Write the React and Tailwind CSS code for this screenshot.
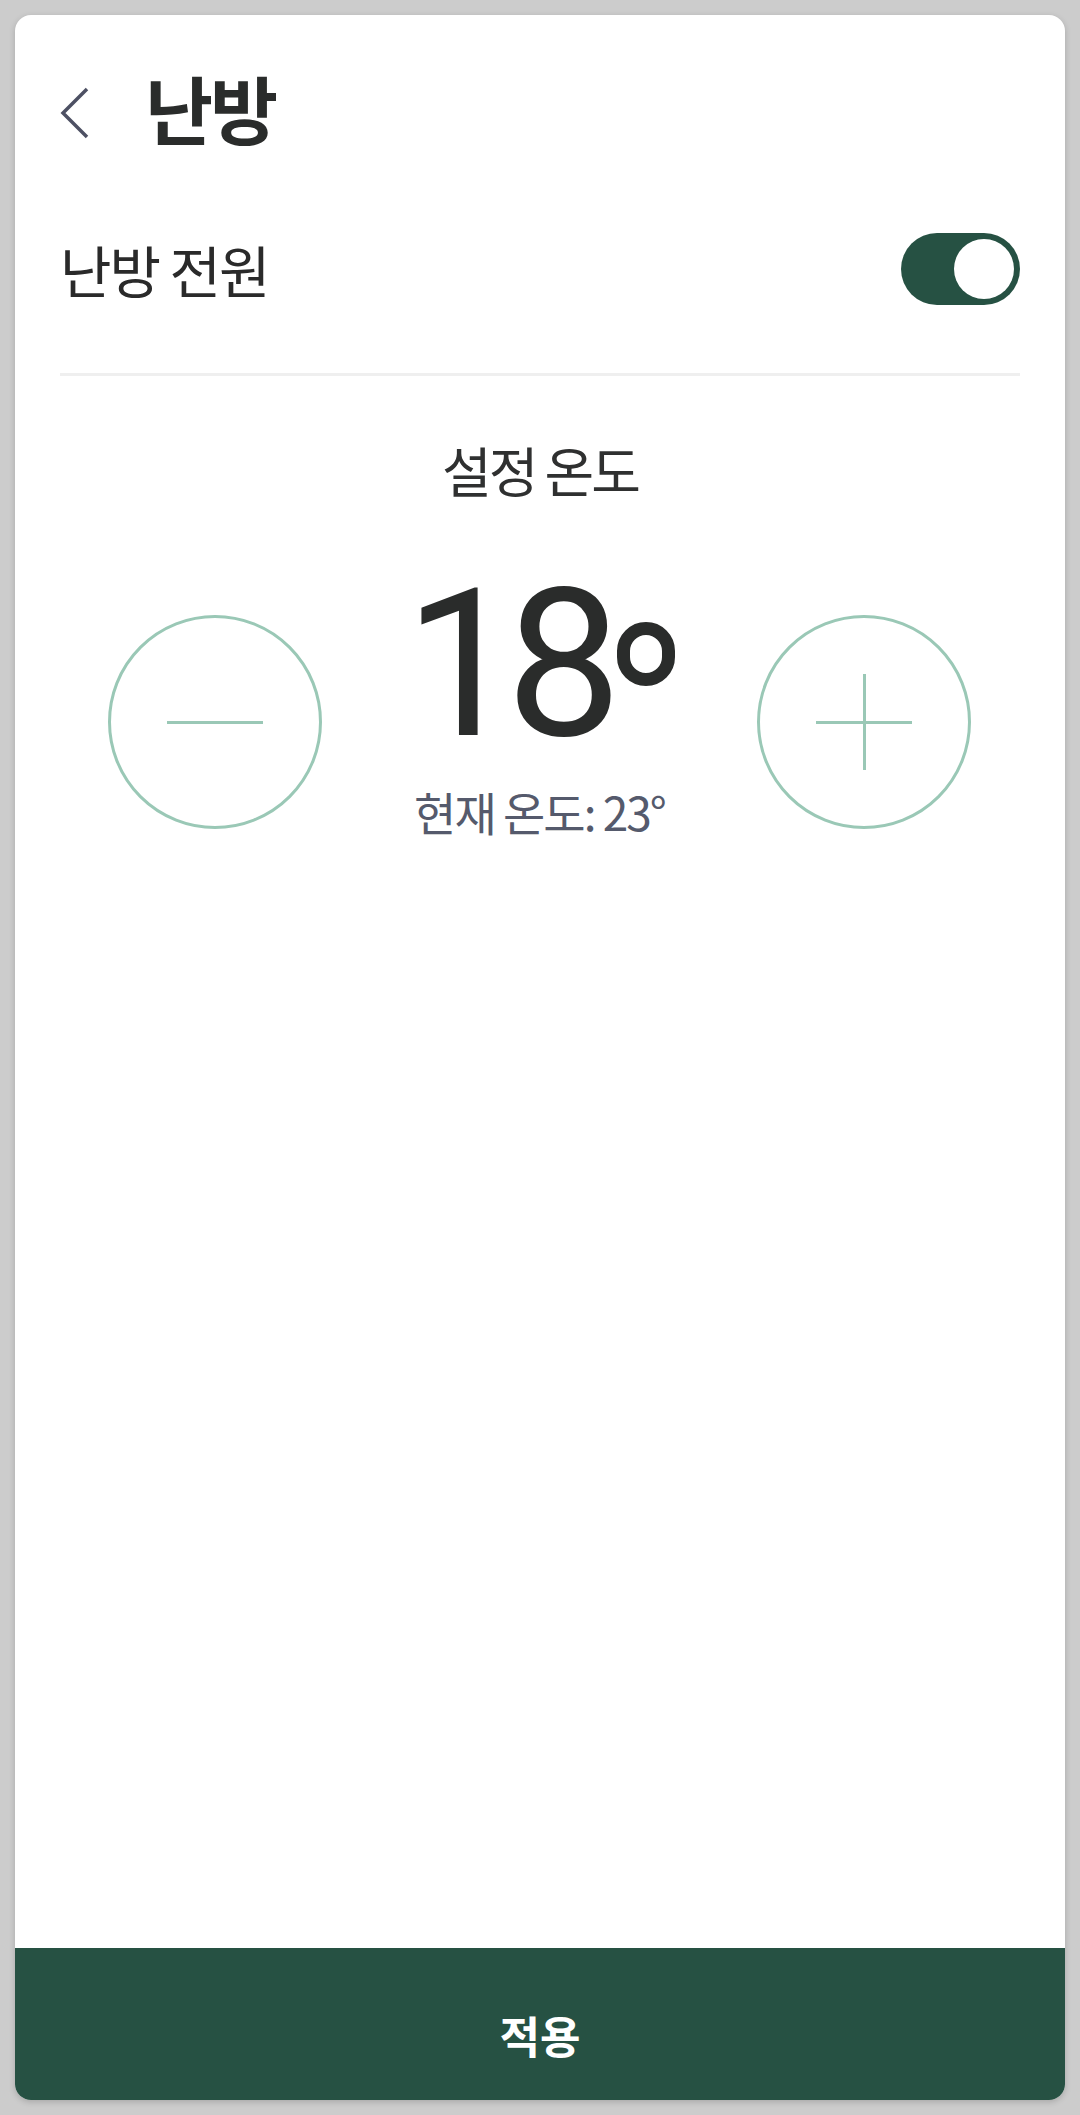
import React from "react";

const KR = { fontFamily: '"Noto Sans CJK KR", "Noto Sans", sans-serif' };

function CircleButton({ plus }) {
  return (
    <div className="w-[214px] h-[214px] rounded-full border-[3px] border-[#9ac8b6] flex items-center justify-center shrink-0 relative">
      <div className="w-[96px] h-[3px] bg-[#9ac8b6]" />
      {plus && <div className="absolute w-[3px] h-[96px] bg-[#9ac8b6]" />}
    </div>
  );
}

export default function App() {
  return (
    <div className="w-[1080px] h-[2115px] bg-[#cccccc] pt-[15px] px-[15px]" style={KR}>
      <div className="w-[1050px] h-[2085px] bg-white rounded-2xl overflow-hidden flex flex-col shadow-[0_2px_6px_rgba(0,0,0,0.18)]">
        {/* Header */}
        <div className="pt-[52px] h-[132px] pl-[45px] flex items-center">
          <svg width="30" height="52" viewBox="0 0 30 52" className="shrink-0 mt-[12px]">
            <polyline points="27,2 3,26 27,50" fill="none" stroke="#4d5063" strokeWidth="3.5" />
          </svg>
          <div className="ml-[55px] text-[74px] leading-[80px] font-bold text-[#2a2c2b] tracking-[-3px]">난방</div>
        </div>

        {/* Power row */}
        <div className="mt-[86px] h-[72px] px-[45px] flex items-center justify-between">
          <div className="text-[56px] leading-none text-[#2a2a2a] tracking-[-2px]">난방 전원</div>
          <div className="w-[119px] h-[72px] rounded-full bg-[#265143] p-[6px] flex justify-end">
            <div className="w-[60px] h-[60px] rounded-full bg-white" />
          </div>
        </div>

        <div className="mx-[45px] mt-[68px] h-[3px] bg-[#efefef]" />

        <div className="mt-[64px] h-[60px] flex items-center justify-center text-[54px] text-[#2f3030] tracking-[-3px] leading-none">
          설정 온도
        </div>

        {/* Temperature row */}
        <div className="mt-[62px] pl-[93px] flex items-start">
          <div className="mt-[53px]">
            <CircleButton />
          </div>
          <div className="w-[435px] flex flex-col items-center">
            <div className="flex items-start text-[#2a2c2b]">
              <span className="text-[206px] leading-none tracking-[-14px]" style={{ fontFamily: 'Roboto, "Noto Sans", sans-serif' }}>18</span>
              <div className="ml-[9px] mt-[60px] w-[58px] h-[64px] rounded-full border-[13px] border-[#2a2c2b]" />
            </div>
            <div className="mt-[20px] text-[46px] leading-none text-[#555a6c] tracking-[-2px]">현재 온도: 23°</div>
          </div>
          <div className="mt-[53px]">
            <CircleButton plus />
          </div>
        </div>

        {/* Apply button */}
        <div className="mt-auto h-[152px] bg-[#265143] flex items-center justify-center pt-[22px]">
          <span className="text-[44px] font-bold text-white leading-none">적용</span>
        </div>
      </div>
    </div>
  );
}
